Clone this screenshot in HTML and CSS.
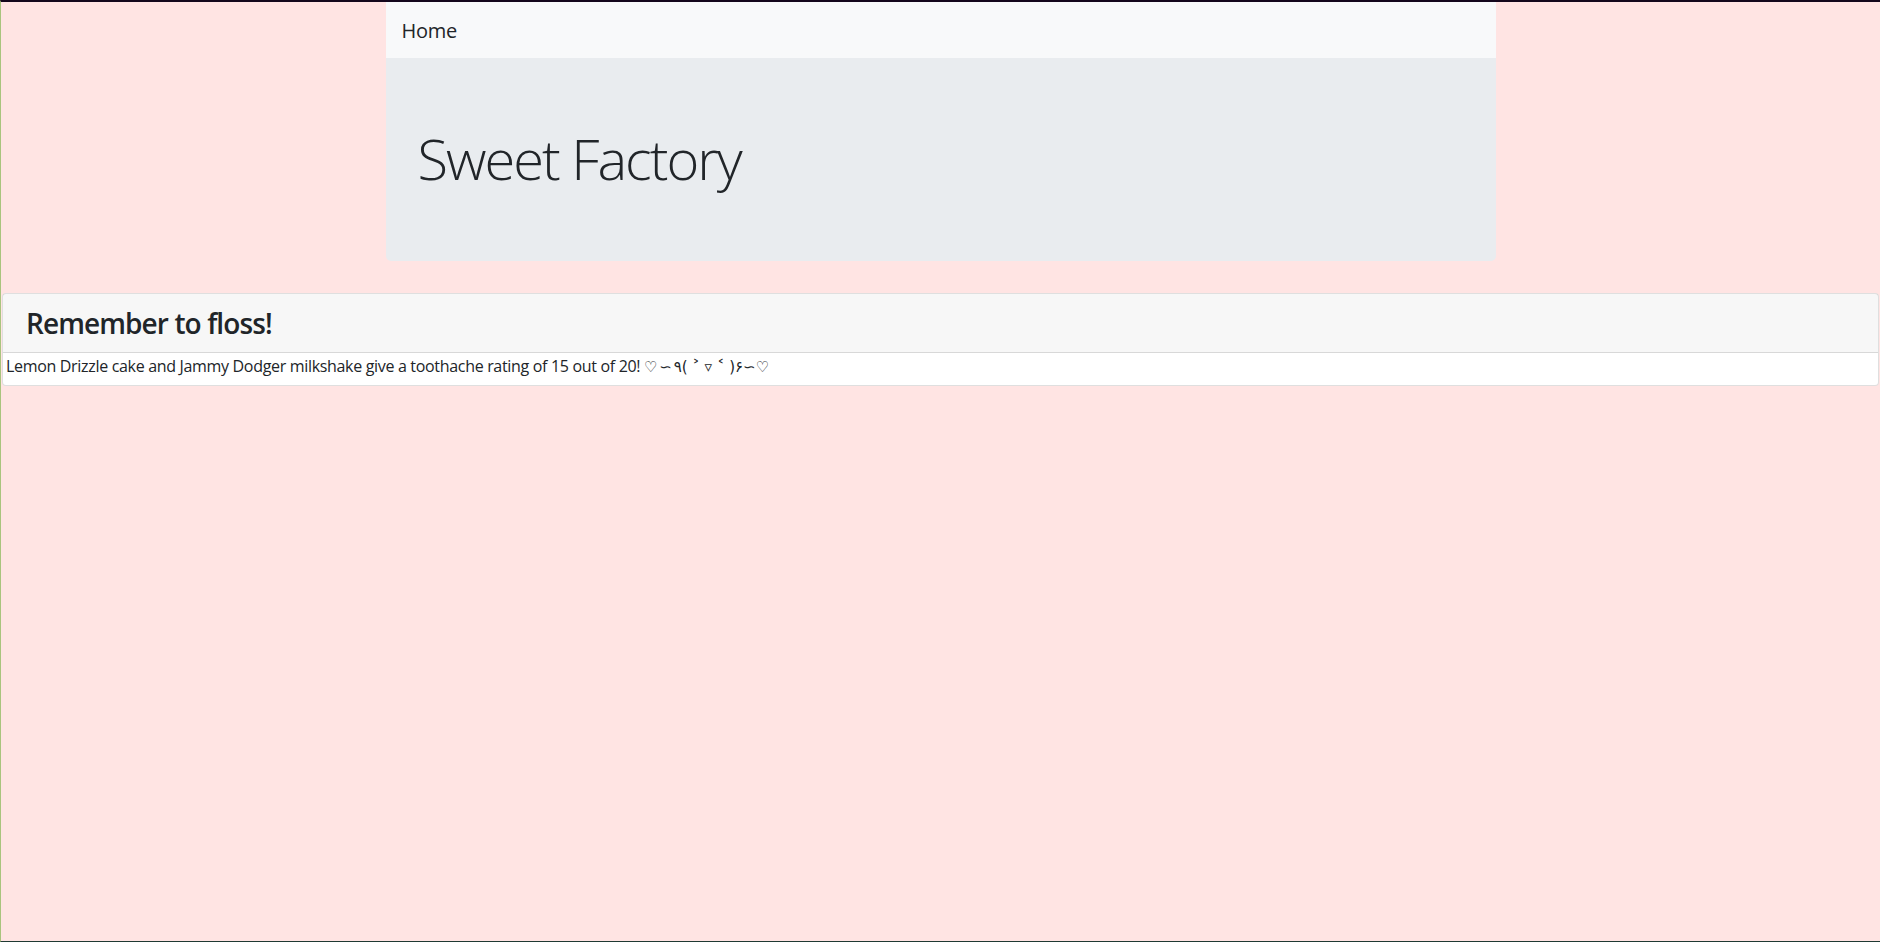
FILE: index.html
```html
<!DOCTYPE html>
<html lang="en">
<head>
<meta charset="utf-8">
<title>Sweet Factory</title>
<link rel="stylesheet" href="styles.css">
</head>
<body>
<div class="container">
  <nav class="navbar">
    <a class="brand" href="#">Home</a>
  </nav>
  <div class="jumbotron">
    <h1 class="display">Sweet Factory</h1>
  </div>
</div>
<div class="card">
  <div class="card-header">
    <h3 class="card-title">Remember to floss!</h3>
  </div>
  <div class="card-body">
    <p class="card-text">Lemon Drizzle cake and Jammy Dodger milkshake give a toothache rating of 15 out of 20! <span class="kaomoji">♡∽٩( ˃ ▿ ˂ )۶∽♡</span></p>
  </div>
</div>
</body>
</html>
```
FILE: styles.css
```css
* { box-sizing: border-box; }
html { height: 100%; }
body {
  margin: 0;
  min-height: 100%;
  background: #ffe4e3;
  color: #212529;
  font-family: "Open Sans", "Noto Sans", "DejaVu Sans", sans-serif;
  font-size: 16px;
  line-height: 1.5;
  border-top: 2px solid #14061c;
  border-left: 1px solid #a9c47e;
  border-bottom: 1px solid #1f3a33;
}
.container {
  width: 1140px;
  margin: 0 auto;
  padding: 0 15px;
}
.navbar {
  background: #f8f9fa;
  padding: 8px 16px;
  display: flex;
  align-items: center;
}
.brand {
  color: #212529;
  text-decoration: none;
  font-size: 20px;
  line-height: 30px;
  padding: 6px 0 4px;
  letter-spacing: -0.3px;
}
.jumbotron {
  background: #e9ecef;
  padding: 64px 32px;
  margin-bottom: 32px;
  border-radius: 0 0 5px 5px;
}
.display {
  margin: 0 0 5px;
  padding-top: 3px;
  font-size: 56px;
  font-weight: 300;
  line-height: 1.2;
  letter-spacing: -2px;
}
.card {
  margin: 0 1px;
  background: #fff;
  border: 1px solid rgba(0,0,0,.125);
  border-radius: 4px;
}
.card-header {
  background: rgba(0,0,0,.03);
  border-bottom: 1px solid rgba(0,0,0,.125);
  padding: 13px 20px 11px 23px;
}
.card-title {
  margin: 0;
  font-size: 28px;
  font-weight: 600;
  line-height: 1.2;
  letter-spacing: -0.9px;
}
.card-body {
  padding: 2px 3px 6px;
}
.card-text {
  margin: 0;
  height: 24px;
  letter-spacing: -0.32px;
  line-height: 22px;
}
.kaomoji {
  font-family: "DejaVu Sans", sans-serif;
  font-size: 15px;
  line-height: 1;
  letter-spacing: 1.8px;
}
```
